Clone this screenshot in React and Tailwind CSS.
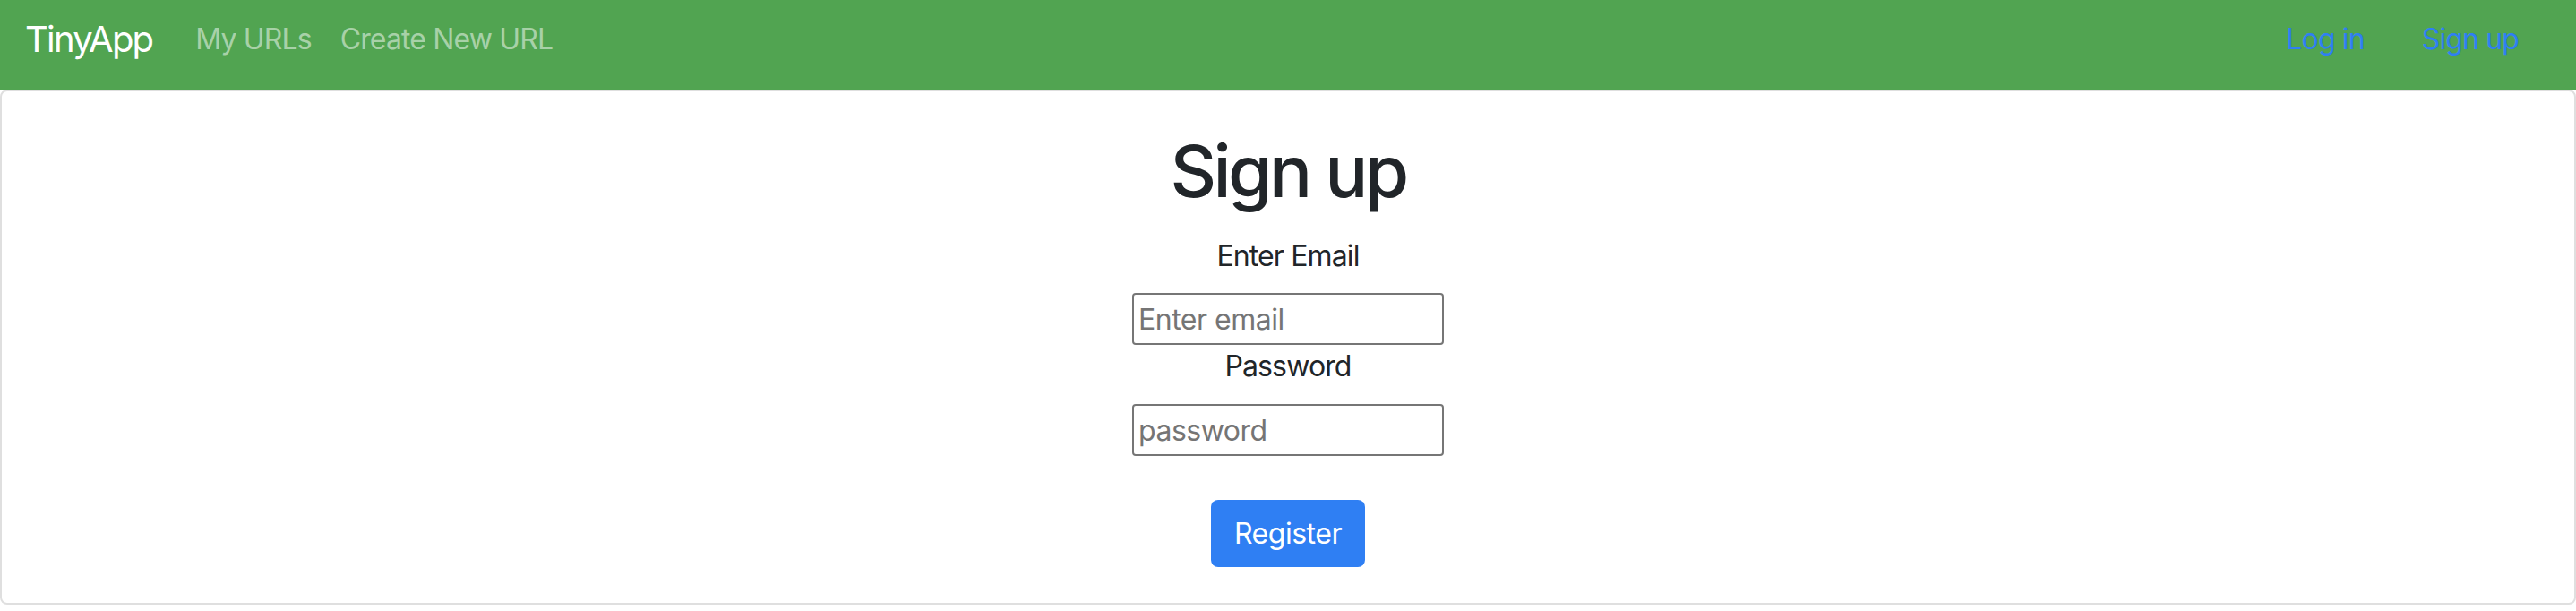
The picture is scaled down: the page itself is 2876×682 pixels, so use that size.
export default function App() {
  return (
    <div className="min-h-screen bg-white text-[#212529]" style={{ fontFamily: 'Inter, "Noto Sans", sans-serif' }}>
      <nav className="h-[100px] bg-[#51a451] flex items-center pl-[28px] pr-8 pb-3">
        <a className="text-[40px] leading-[60px] tracking-[-0.045em] text-white mr-8">TinyApp</a>
        <a className="text-[32px] leading-[48px] tracking-[-0.027em] text-[#a8d1a8] px-4">My URLs</a>
        <a className="text-[32px] leading-[48px] tracking-[-0.027em] text-[#a8d1a8] px-4">Create New URL</a>
        <div className="ml-auto flex">
          <a className="text-[32px] leading-[48px] tracking-[-0.027em] text-[#2f7ff3] px-8">Log in</a>
          <a className="text-[32px] leading-[48px] tracking-[-0.027em] text-[#2f7ff3] px-8">Sign up</a>
        </div>
      </nav>
      <div className="border-2 border-[#dfdfdf] rounded-lg pt-[41px] pb-10 flex flex-col items-center">
        <h1 className="text-[80px] leading-[96px] font-medium tracking-[-0.045em] mb-[23px]">Sign up</h1>
        <form className="flex flex-col items-center">
          <label className="text-[32px] leading-[48px] tracking-[-0.027em] mb-[17px]">Enter Email</label>
          <input
            type="email"
            placeholder="Enter email"
            className="w-[348px] h-[58px] border-2 border-[#767676] rounded-[4px] px-[5px] text-[32px] tracking-[-0.015em] placeholder:text-[#757575] outline-none"
          />
          <label className="text-[32px] leading-[48px] tracking-[-0.027em] mb-[18px]">Password</label>
          <input
            type="password"
            placeholder="password"
            className="w-[348px] h-[58px] border-2 border-[#767676] rounded-[4px] px-[5px] text-[32px] tracking-[-0.015em] placeholder:text-[#757575] outline-none"
          />
          <button
            type="button"
            className="mt-[49px] w-[172px] h-[75px] rounded-lg bg-[#2f7ff3] text-white text-[32px] tracking-[-0.015em]"
          >
            Register
          </button>
        </form>
      </div>
    </div>
  )
}
